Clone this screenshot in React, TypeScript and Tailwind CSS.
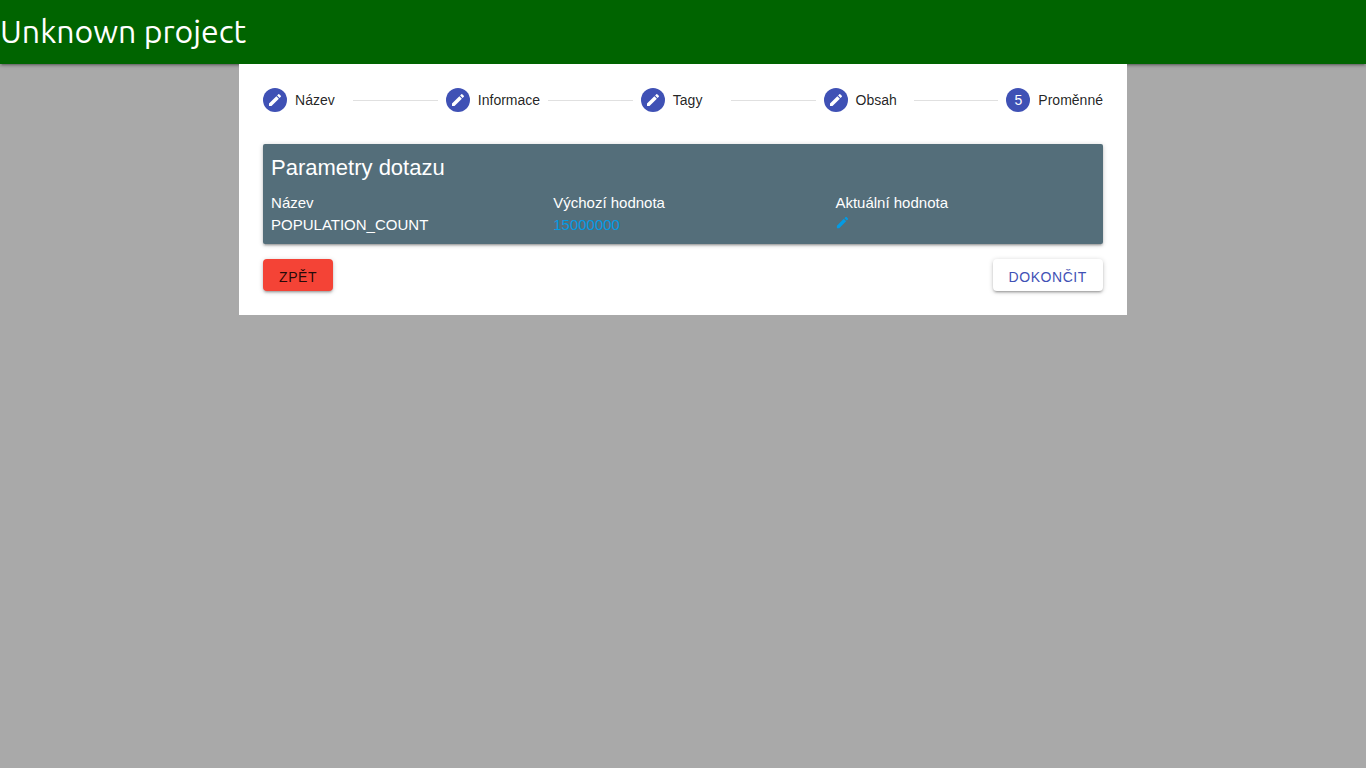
import React, { Fragment } from "react";
import { MdEdit } from "react-icons/md";

const ELEVATION =
  "shadow-[0_2px_2px_0_rgba(0,0,0,0.14),0_3px_1px_-2px_rgba(0,0,0,0.12),0_1px_5px_0_rgba(0,0,0,0.2)]";

const steps = [
  { label: "Název", done: true },
  { label: "Informace", done: true },
  { label: "Tagy", done: true },
  { label: "Obsah", done: true },
  { label: "Proměnné", done: false },
];

const parameters = [{ name: "POPULATION_COUNT", defaultValue: "15000000" }];

function Header() {
  return (
    <header className={`flex h-16 items-center bg-[#006400] pb-0.5 ${ELEVATION}`}>
      <h1 className="font-[Ubuntu,'Noto_Sans',sans-serif] text-[32px] leading-10 font-normal text-white">
        Unknown project
      </h1>
    </header>
  );
}

function Stepper() {
  return (
    <ol className="flex h-6 items-center gap-2">
      {steps.map((step, index) => (
        <Fragment key={step.label}>
          {index > 0 && <li aria-hidden="true" className="h-px flex-1 bg-[#e0e0e0]" />}
          <li className="flex items-center gap-2">
            <span className="flex size-6 items-center justify-center rounded-full bg-[#3f51b5] text-sm text-white">
              {step.done ? <MdEdit size={16} /> : index + 1}
            </span>
            <span className="min-w-[50px] text-sm text-black/87">{step.label}</span>
          </li>
        </Fragment>
      ))}
    </ol>
  );
}

function Parameters() {
  return (
    <section className={`mt-8 rounded-xs bg-[#546e7a] p-2 text-white ${ELEVATION}`}>
      <h2 className="mb-2 text-[22px] leading-8">Parametry dotazu</h2>
      <table className="w-full table-fixed text-left text-[15px] leading-[22px]">
        <colgroup>
          <col className="w-[34.25%]" />
          <col className="w-[34.25%]" />
          <col />
        </colgroup>
        <thead>
          <tr>
            <th className="p-0 font-normal">Název</th>
            <th className="p-0 font-normal">Výchozí hodnota</th>
            <th className="p-0 font-normal">Aktuální hodnota</th>
          </tr>
        </thead>
        <tbody>
          {parameters.map((parameter) => (
            <tr key={parameter.name}>
              <td className="p-0">{parameter.name}</td>
              <td className="p-0">
                <a href="#default" className="text-[#039be5]">
                  {parameter.defaultValue}
                </a>
              </td>
              <td className="p-0 pt-px align-top">
                <a href="#edit" aria-label="Upravit hodnotu" className="flex w-fit text-[#039be5]">
                  <MdEdit size={15} />
                </a>
              </td>
            </tr>
          ))}
        </tbody>
      </table>
    </section>
  );
}

export default function App() {
  return (
    <div className="min-h-screen bg-[#a9a9a9] font-['Liberation_Sans',Arial,sans-serif]">
      <Header />
      <main className="relative mx-auto w-[65%] bg-white p-6">
        <Stepper />
        <Parameters />
        <div className="mt-[15px] flex justify-between text-sm">
          <button
            type="button"
            className={`flex h-8 items-center rounded-sm bg-[#f44336] px-4 pt-1 tracking-[0.04em] text-black/87 ${ELEVATION}`}
          >
            ZPĚT
          </button>
          <button
            type="button"
            className={`flex h-8 items-center rounded-sm bg-white px-4 pt-1 tracking-[0.04em] text-[#3f51b5] ${ELEVATION}`}
          >
            DOKONČIT
          </button>
        </div>
      </main>
    </div>
  );
}
